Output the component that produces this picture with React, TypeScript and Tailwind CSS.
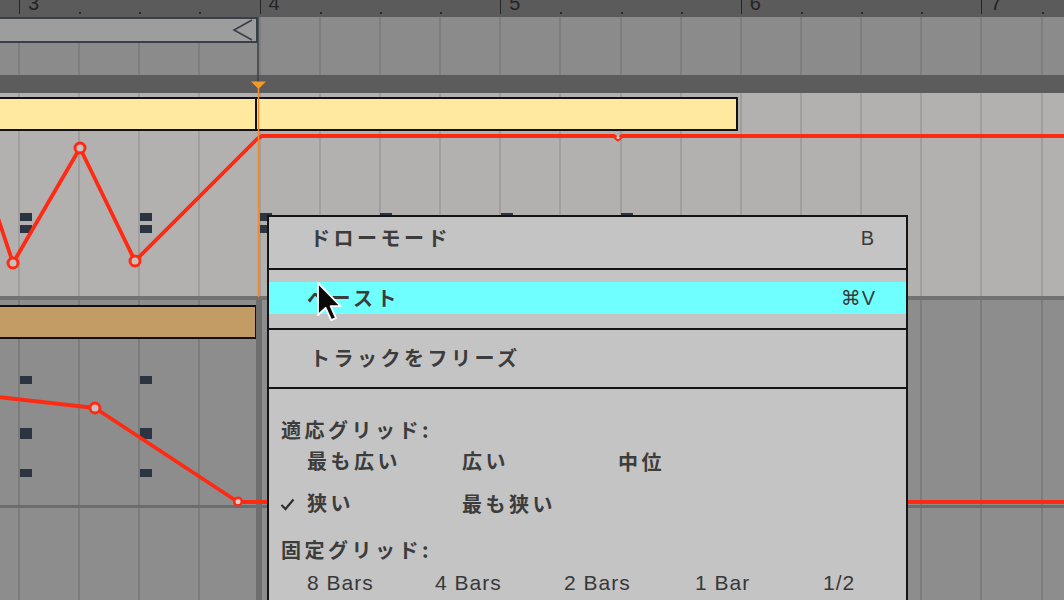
import React from 'react';

const BEAT = 60.15;
const X0 = 19;
const gridXs = Array.from({ length: 18 }, (_, i) => X0 + i * BEAT);
const bars = [
  { n: '3', x: X0 },
  { n: '4', x: X0 + 4 * BEAT },
  { n: '5', x: X0 + 8 * BEAT },
  { n: '6', x: X0 + 12 * BEAT },
  { n: '7', x: X0 + 16 * BEAT },
];

const GridLines: React.FC<{ color: string }> = ({ color }) => (
  <>
    {gridXs.map((x) => (
      <div key={x} className={`absolute top-0 bottom-0 w-[2px] ${color}`} style={{ left: x - 1 }} />
    ))}
  </>
);

const Ruler: React.FC = () => (
  <div className="relative h-[17px] shrink-0 overflow-hidden bg-[#5b5b5b]">
    {bars.map((b) => (
      <React.Fragment key={b.n}>
        <div className="absolute top-0 h-[14px] w-px bg-[#262626]" style={{ left: b.x }} />
        <span
          className="absolute top-[-7px] text-[20px] leading-none text-[#242424] font-['Liberation_Sans',sans-serif]"
          style={{ left: b.x + 9 }}
        >
          {b.n}
        </span>
        {[1, 2, 3].map((k) => (
          <div
            key={k}
            className="absolute top-[12px] h-[2px] w-[2px] bg-[#2a2a2a]"
            style={{ left: b.x + k * BEAT }}
          />
        ))}
      </React.Fragment>
    ))}
  </div>
);

const jp = "font-['Noto_Sans_CJK_JP','Noto_Sans',sans-serif]";
const lat = "font-['Liberation_Sans','DejaVu_Sans','Noto_Sans_CJK_JP',sans-serif]";

const MenuText: React.FC<{ children: React.ReactNode }> = ({ children }) => (
  <span className={`${jp} text-[20px] leading-[24px] tracking-[3.5px] font-semibold text-[#3c3c3c]`}>{children}</span>
);

const Shortcut: React.FC<{ children: React.ReactNode }> = ({ children }) => (
  <span className={`${lat} text-[20px] leading-[24px] tracking-[1px] text-[#3a3a3a]`}>{children}</span>
);

const ContextMenu: React.FC = () => (
  <div className="absolute left-[267px] top-[215px] w-[641px] h-[400px] border-2 border-[#141414] bg-[#c4c4c4]">
    <div className="h-[53px] pt-[9px] pl-[41px] pr-[31px] flex justify-between items-start border-b-2 border-[#141414]">
      <MenuText>ドローモード</MenuText>
      <Shortcut>B</Shortcut>
    </div>
    <div className="h-[60px] pt-[12px] border-b-2 border-[#141414]">
      <div className="h-[32px] bg-[#70ffff] flex items-center justify-between pl-[38px] pr-[30px]">
        <MenuText>ペースト</MenuText>
        <Shortcut>⌘V</Shortcut>
      </div>
    </div>
    <div className="h-[59px] pt-[16px] pl-[41px] border-b-2 border-[#141414]">
      <MenuText>トラックをフリーズ</MenuText>
    </div>
    <div className="flex flex-col">
      <div className="mt-[25px] h-[32px] flex items-center pl-[12px]">
        <MenuText>適応グリッド:</MenuText>
      </div>
      <div className="h-[32px] flex items-center pl-[38px]">
        <div className="w-[155px]"><MenuText>最も広い</MenuText></div>
        <div className="w-[156px]"><MenuText>広い</MenuText></div>
        <MenuText>中位</MenuText>
      </div>
      <div className="mt-[10px] h-[32px] flex items-center pl-[11px]">
        <div className="w-[27px] flex items-center">
          <svg width="15" height="13" viewBox="0 0 15 13">
            <path d="M1.5 7 L5.5 11 L13.5 1.5" fill="none" stroke="#2e2e2e" strokeWidth="2.2" />
          </svg>
        </div>
        <div className="w-[155px]"><MenuText>狭い</MenuText></div>
        <MenuText>最も狭い</MenuText>
      </div>
      <div className="mt-[14px] h-[32px] flex items-center pl-[12px]">
        <MenuText>固定グリッド:</MenuText>
      </div>
      <div className={`mt-[1px] h-[32px] flex items-center pl-[38px] ${lat} text-[21px] tracking-[1px] text-[#383838]`}>
        <div className="w-[128px]">8 Bars</div>
        <div className="w-[129px]">4 Bars</div>
        <div className="w-[131px]">2 Bars</div>
        <div className="w-[128px]">1 Bar</div>
        <div>1/2</div>
      </div>
    </div>
  </div>
);

const Automation: React.FC = () => (
  <svg className="absolute inset-0 pointer-events-none" width="1064" height="600" viewBox="0 0 1064 600">
    {/* clip end / start marker */}
    <line x1="258" y1="17" x2="258" y2="88" stroke="#3a3e48" strokeWidth="1.5" />
    <rect x="256" y="300" width="6" height="300" fill="#6e6e6e" />
    {/* track B envelope */}
    <polyline
      points="-2,218 13,263 80,148 135,261 257,139 262,136 614,136 618,139.5 622,136 1066,136"
      fill="none"
      stroke="#ff2a12"
      strokeWidth="3.8"
      strokeLinejoin="round"
    />
    <circle cx="13" cy="263" r="5" fill="#c6c2c2" stroke="#ff2a12" strokeWidth="3" />
    <circle cx="80" cy="148" r="5" fill="#c6c2c2" stroke="#ff2a12" strokeWidth="3" />
    <circle cx="135" cy="261" r="5" fill="#c6c2c2" stroke="#ff2a12" strokeWidth="3" />
    <circle cx="618" cy="137.5" r="1.6" fill="#d8d4d4" />
    {/* track C envelope */}
    <polyline
      points="-2,397 95,408 238,502 1066,502"
      fill="none"
      stroke="#ff2a12"
      strokeWidth="3.8"
      strokeLinejoin="round"
    />
    <circle cx="95" cy="408" r="5" fill="#c6c2c2" stroke="#ff2a12" strokeWidth="3" />
    <circle cx="238" cy="501.5" r="3.8" fill="#d6d2d2" stroke="#ff2a12" strokeWidth="2.5" />
    {/* playhead */}
    <line x1="258.5" y1="86" x2="258.5" y2="297" stroke="#ef8a32" strokeWidth="1.5" />
    <polygon points="251,81.5 266,81.5 258.5,89" fill="#f49a2c" />
  </svg>
);

const Cursor: React.FC = () => (
  <svg className="absolute left-[316px] top-[281px]" width="26" height="42" viewBox="0 0 13 21">
    <path
      d="M1 1 L1 17 L4.8 13.4 L7.6 19.6 L10 18.6 L7.3 12.6 L12.3 12.6 Z"
      fill="#0a0a0a"
      stroke="#ffffff"
      strokeWidth="0.9"
      strokeLinejoin="round"
    />
  </svg>
);

export default function App() {
  const handleXs = [26, 146, 266, 386, 507, 627];
  return (
    <div className="relative w-[1064px] h-[600px] overflow-hidden bg-[#8d8d8d]">
      <div className="flex flex-col h-full">
        <Ruler />
        {/* track A */}
        <div className="relative h-[58px] shrink-0 bg-[#8b8b8b]">
          <GridLines color="bg-[#7e7e7e]" />
          <div className="absolute left-[-3px] top-0 w-[261px] h-[26px] bg-[#9d9d9d] border-y-2 border-r-2 border-[#3a3e48]">
            <svg className="absolute right-[2px] top-0" width="22" height="22" viewBox="0 0 22 22">
              <polyline points="20,1 2,11 20,21" fill="none" stroke="#3a3e48" strokeWidth="1.6" />
            </svg>
          </div>
        </div>
        <div className="h-[18px] shrink-0 bg-[#5c5c5c]" />
        {/* track B */}
        <div className="relative h-[203px] shrink-0 bg-[#b3b0b0]">
          <GridLines color="bg-[#a19e9e]" />
          <div className="absolute left-[-3px] top-[4px] w-[260px] h-[34px] bg-[#ffe99f] border-2 border-[#111]" />
          <div className="absolute left-[257px] top-[4px] w-[481px] h-[34px] bg-[#ffe99f] border-2 border-l-0 border-[#111]" />
          {handleXs.map((x) => (
            <React.Fragment key={x}>
              <div className="absolute top-[120px] w-[12px] h-[8px] bg-[#2c3341]" style={{ left: x - 6 }} />
              <div className="absolute top-[132px] w-[12px] h-[8px] bg-[#2c3341]" style={{ left: x - 6 }} />
            </React.Fragment>
          ))}
        </div>
        <div className="h-[4px] shrink-0 bg-[#727272]" />
        {/* track C */}
        <div className="relative h-[205px] shrink-0 bg-[#8d8d8d]">
          <GridLines color="bg-[#7c7c7c]" />
          <div className="absolute left-[-3px] top-[5px] w-[260px] h-[34px] bg-[#c29c64] border-2 border-[#111]" />
          {[26, 146].map((x) => (
            <React.Fragment key={x}>
              <div className="absolute top-[76px] w-[12px] h-[8px] bg-[#2c3341]" style={{ left: x - 6 }} />
              <div className="absolute top-[128px] w-[12px] h-[11px] bg-[#2c3341]" style={{ left: x - 6 }} />
              <div className="absolute top-[169px] w-[12px] h-[8px] bg-[#2c3341]" style={{ left: x - 6 }} />
            </React.Fragment>
          ))}
        </div>
        <div className="h-[3px] shrink-0 bg-[#6c6c6c]" />
        {/* track D */}
        <div className="relative flex-1 bg-[#8d8d8d]">
          <GridLines color="bg-[#7c7c7c]" />
        </div>
      </div>
      <Automation />
      <ContextMenu />
      <Cursor />
    </div>
  );
}
